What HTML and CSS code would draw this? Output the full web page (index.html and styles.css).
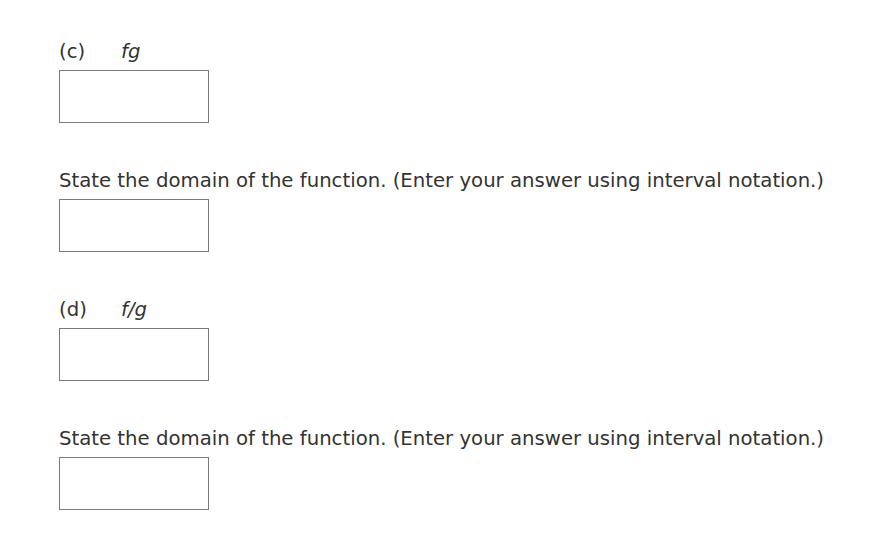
FILE: index.html
```html
<!DOCTYPE html>
<html lang="en">
<head>
  <meta charset="UTF-8" />
  <title>Function operations</title>
  <link rel="stylesheet" href="styles.css">
</head>
<body>

  <div class="part">
    <div class="label"><span class="letter">(c)</span><span class="expr">fg</span></div>
    <input type="text" class="answer" />
  </div>

  <div class="part">
    <div class="label">State the domain of the function. (Enter your answer using interval notation.)</div>
    <input type="text" class="answer" />
  </div>

  <div class="part">
    <div class="label"><span class="letter">(d)</span><span class="expr">f/g</span></div>
    <input type="text" class="answer" />
  </div>

  <div class="part">
    <div class="label">State the domain of the function. (Enter your answer using interval notation.)</div>
    <input type="text" class="answer" />
  </div>

</body>
</html>
```

FILE: styles.css
```css
body {
  font-family: 'DejaVu Sans', Verdana, sans-serif;
  font-size: 19.7px;
  color: #333;
  background-color: #fff;
  margin: 0;
  padding: 40px 0 0 59px;
}

.part {
  margin-bottom: 46px;
}

.label {
  line-height: 24px;
  height: 24px;
  margin-bottom: 6px;
}

.letter {
  display: inline-block;
  width: 62px;
}

.expr {
  font-style: italic;
}

.answer {
  display: block;
  width: 150px;
  height: 53px;
  margin: 0;
  padding: 0;
  border: 1px solid #7a7a7a;
  box-sizing: border-box;
  background: #fff;
}
```
